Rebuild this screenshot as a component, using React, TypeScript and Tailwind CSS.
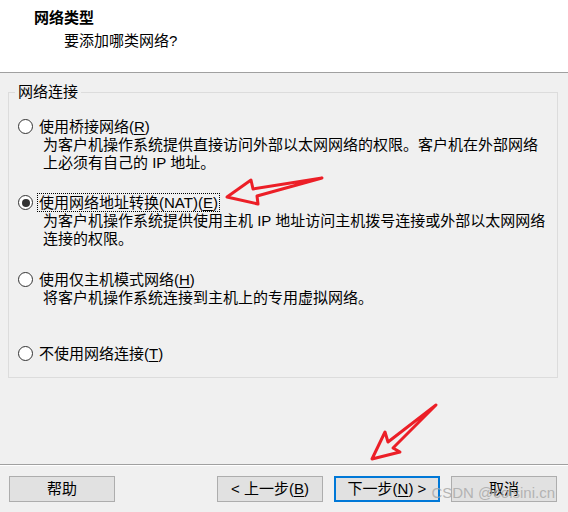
import React from 'react';

const font = "font-['Liberation_Sans','Noto_Sans_CJK_SC',sans-serif]";

function Radio({ checked }: { checked?: boolean }) {
  return (
    <span className="w-[15px] h-[15px] rounded-full border border-[#333333] bg-white flex items-center justify-center shrink-0">
      {checked && <span className="w-[8px] h-[8px] rounded-full bg-[#333333]" />}
    </span>
  );
}

function Key({ k }: { k: string }) {
  return (
    <>
      (<span className="underline underline-offset-2">{k}</span>)
    </>
  );
}

interface OptionProps {
  label: string;
  keyChar: string;
  suffix?: string;
  lines: string[];
  checked?: boolean;
  className?: string;
}

function Option({ label, keyChar, suffix, lines, checked, className }: OptionProps) {
  return (
    <div className={className}>
      <div className="flex items-center h-[19px]">
        <Radio checked={checked} />
        <span
          className={
            'ml-[4px] px-[1px] leading-[17px] border ' +
            (checked ? 'border-dotted border-black' : 'border-transparent')
          }
        >
          {label}
          {suffix}
          <Key k={keyChar} />
        </span>
      </div>
      {lines.map((l, i) => (
        <div key={i} className="pl-[25px] leading-[18px] whitespace-nowrap">
          {l}
        </div>
      ))}
    </div>
  );
}

function Btn({ children, primary, className }: { children: React.ReactNode; primary?: boolean; className?: string }) {
  return (
    <button
      className={
        'h-[26px] w-[106px] bg-[#e1e1e1] text-[15px] leading-[18px] text-black flex items-center justify-center ' +
        (primary ? 'border-2 border-[#0078d7]' : 'border border-[#adadad]') +
        ' ' +
        (className ?? '')
      }
    >
      {children}
    </button>
  );
}

export default function App() {
  return (
    <div className={`relative w-[568px] h-[512px] bg-[#f0f0f0] text-[15px] text-black flex flex-col overflow-hidden ${font}`}>
      {/* Header */}
      <div className="h-[73px] bg-white border-b border-[#a0a0a0] pt-[9px]">
        <div className="pl-[34px] font-bold leading-[18px]">网络类型</div>
        <div className="pl-[64px] mt-[5px] leading-[18px]">要添加哪类网络?</div>
      </div>

      {/* Group */}
      <fieldset className="mt-[10px] mx-[8px] w-[550px] border border-[#dcdcdc] pl-[9px] pb-[14px]">
        <legend className="ml-[-3px] px-[3px] leading-[18px]">网络连接</legend>

        <Option
          className="mt-[16px]"
          label="使用桥接网络"
          keyChar="R"
          lines={['为客户机操作系统提供直接访问外部以太网网络的权限。客户机在外部网络', '上必须有自己的 IP 地址。']}
        />
        <Option
          className="mt-[21px]"
          label="使用网络地址转换"
          suffix="(NAT)"
          keyChar="E"
          checked
          lines={['为客户机操作系统提供使用主机 IP 地址访问主机拨号连接或外部以太网网络', '连接的权限。']}
        />
        <Option
          className="mt-[22px]"
          label="使用仅主机模式网络"
          keyChar="H"
          lines={['将客户机操作系统连接到主机上的专用虚拟网络。']}
        />
        <Option className="mt-[37px]" label="不使用网络连接" keyChar="T" lines={[]} />
      </fieldset>

      {/* Footer */}
      <div className="mt-auto border-t border-[#a0a0a0]">
        <div className="h-px bg-white" />
        <div className="flex items-center pt-[10px] pb-[10px] pl-[9px] pr-[11px]">
          <Btn>帮助</Btn>
          <div className="ml-auto flex gap-[11px]">
            <Btn className="w-[105px]">
              &lt; 上一步<Key k="B" />
            </Btn>
            <Btn primary>
              下一步<Key k="N" />&nbsp;&gt;
            </Btn>
            <Btn>取消</Btn>
          </div>
        </div>
      </div>

      {/* Annotation arrows */}
      <svg className="absolute inset-0 pointer-events-none" width="568" height="512" viewBox="0 0 568 512">
        <path
          d="M227 197 L251 180 L253 189 L322 178 L257 196 L258 204 Z"
          fill="none"
          stroke="#ec1f27"
          strokeWidth="3"
          strokeLinejoin="round"
        />
        <path
          d="M372 459 L385 432 L388 442 L436 405 L393 448 L400 452 Z"
          fill="none"
          stroke="#ec1f27"
          strokeWidth="3"
          strokeLinejoin="round"
        />
      </svg>

      {/* Watermark */}
      <span className="absolute right-[13px] bottom-[10px] text-[15px] leading-[18px] text-[rgba(170,170,170,0.85)] font-['Liberation_Sans',sans-serif]">
        CSDN @colsini.cn
      </span>
    </div>
  );
}
